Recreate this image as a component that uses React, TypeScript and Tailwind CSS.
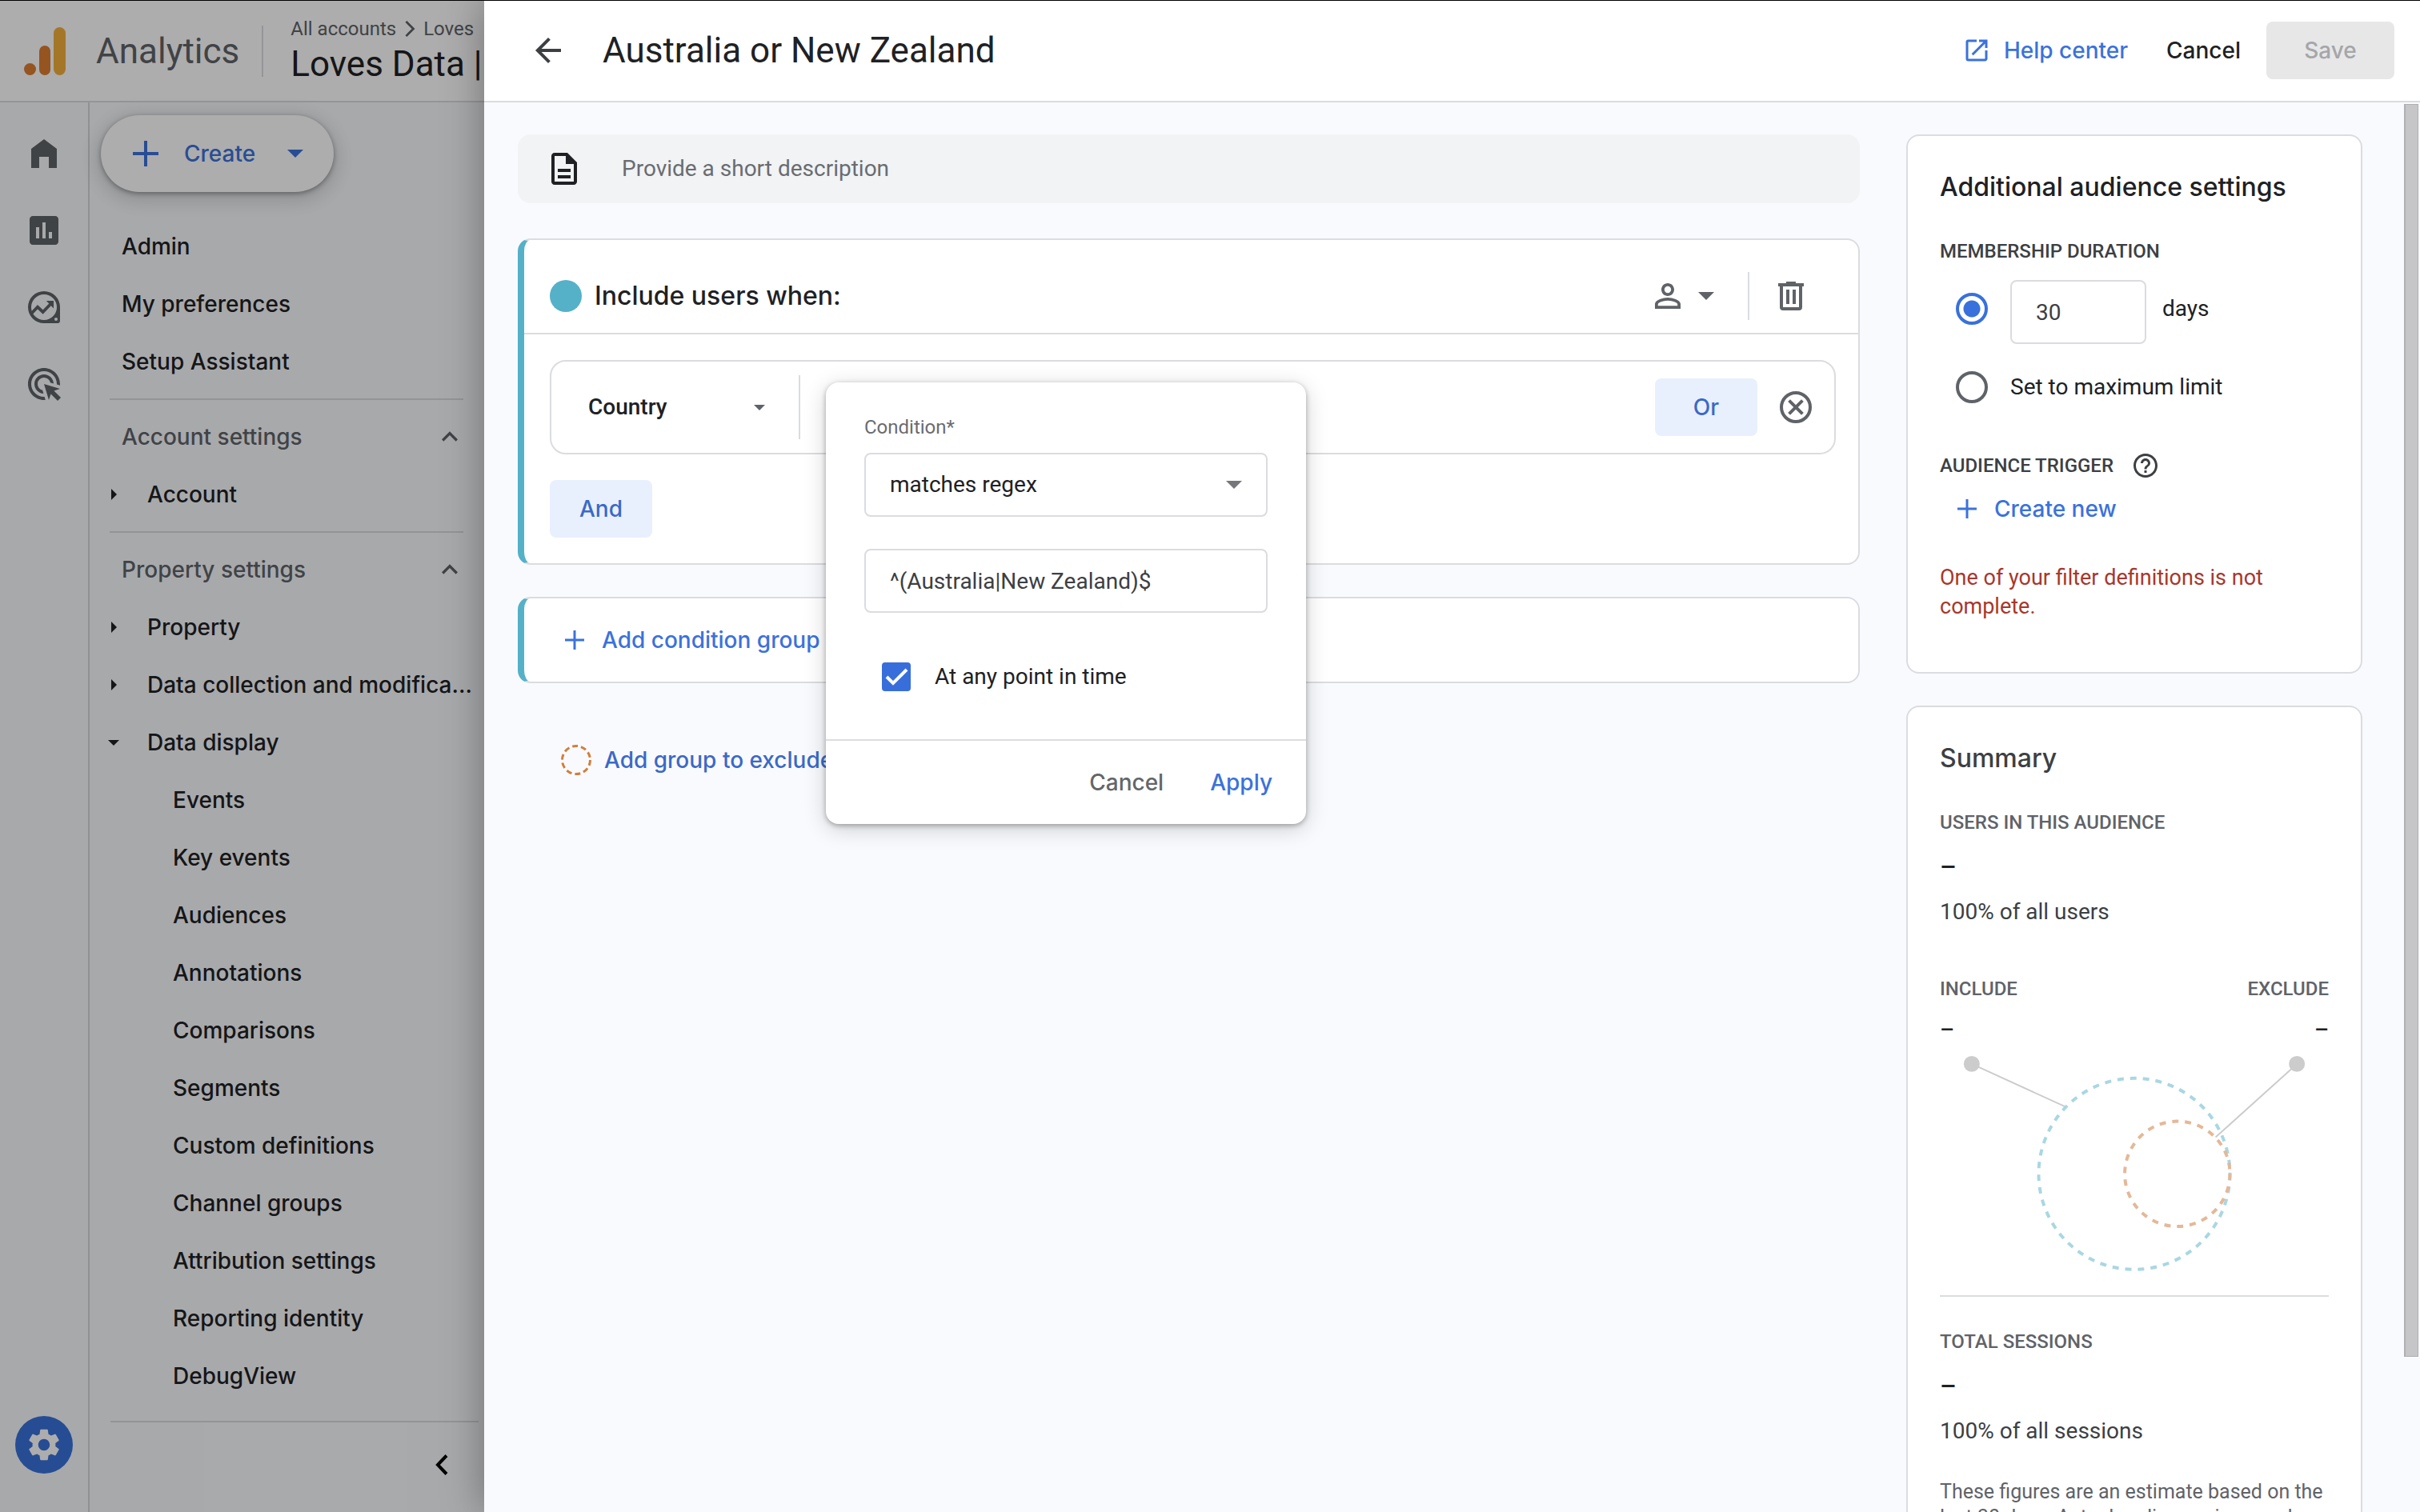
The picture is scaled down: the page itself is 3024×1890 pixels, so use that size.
import React, { useState } from 'react';
import {
  MdAdsClick,
  MdArrowBack,
  MdExpandLess,
  MdHelpOutline,
  MdInsertChart,
  MdOpenInNew,
  MdOutlineDescription,
  MdPersonOutline,
  MdSettings,
} from 'react-icons/md';

interface IconProps {
  className?: string;
}

function ArrowDown({ className }: IconProps) {
  return (
    <svg viewBox="0 0 20 10" className={className} fill="currentColor" aria-hidden="true">
      <path d="M0 0h20L10 10z" />
    </svg>
  );
}

function ArrowRight({ className }: IconProps) {
  return (
    <svg viewBox="0 0 7 14" className={className} fill="currentColor" aria-hidden="true">
      <path d="M0 0l7 7-7 7z" />
    </svg>
  );
}

function Plus({ className }: IconProps) {
  return (
    <svg viewBox="0 0 24 24" className={className} fill="none" stroke="currentColor" strokeWidth={3} aria-hidden="true">
      <path d="M12 0v24M0 12h24" />
    </svg>
  );
}

function Logo() {
  return (
    <svg viewBox="0 0 52 60" className="h-15 w-13 shrink-0" aria-hidden="true">
      <circle cx="7.5" cy="52.5" r="7.5" fill="#dd7d30" />
      <rect x="19" y="23" width="14" height="37" rx="7" fill="#dd7d30" />
      <rect x="37" y="0" width="15" height="60" rx="7.5" fill="#f2b03c" />
    </svg>
  );
}

function HomeIcon() {
  return (
    <svg viewBox="0 0 24 24" className="size-12" fill="currentColor" aria-hidden="true">
      <path d="M4 21V9l8-6 8 6v12h-5v-7H9v7z" />
    </svg>
  );
}

function ExploreIcon() {
  return (
    <svg viewBox="0 0 24 24" className="size-12" fill="currentColor" aria-hidden="true">
      <path
        fillRule="evenodd"
        d="M12 2a10 10 0 0 1 10 10v8.5a1.5 1.5 0 0 1-1.5 1.5H12a10 10 0 0 1 0-20zm0 2a8 8 0 1 0 0 16 8 8 0 0 0 0-16zm7.5 14.5a1 1 0 1 0 0 2 1 1 0 0 0 0-2z"
      />
      <path d="M4.2 15.9L8 11.9l3.3 3.1 5.2-5.4" fill="none" stroke="currentColor" strokeWidth="1.9" />
      <path d="M13.4 8H18v4.8z" />
    </svg>
  );
}

function TrashIcon() {
  return (
    <svg viewBox="0 0 24 24" className="size-12" fill="currentColor" aria-hidden="true">
      <path
        fillRule="evenodd"
        d="M7 21a2 2 0 0 1-2-2V6H4V4h5V3h6v1h5v2h-1v13a2 2 0 0 1-2 2zM17 6H7v13h10zM9 17h2V8H9zm4 0h2V8h-2z"
      />
    </svg>
  );
}

function RemoveIcon() {
  return (
    <svg viewBox="0 0 24 24" className="size-12" fill="none" stroke="currentColor" strokeWidth="2" aria-hidden="true">
      <circle cx="12" cy="12" r="9" />
      <path d="M7.8 7.8l8.4 8.4M16.2 7.8l-8.4 8.4" />
    </svg>
  );
}

const displayItems = [
  'Events',
  'Key events',
  'Audiences',
  'Annotations',
  'Comparisons',
  'Segments',
  'Custom definitions',
  'Channel groups',
  'Attribution settings',
  'Reporting identity',
  'DebugView',
];

function NavLink({ children }: { children: React.ReactNode }) {
  return (
    <a href="#" className="flex h-18 items-center pl-10">
      {children}
    </a>
  );
}

function NavHeading({ children }: { children: React.ReactNode }) {
  return (
    <button className="flex h-18 w-full items-center justify-between pl-10 pr-[23px] text-[#5f6368]">
      {children}
      <MdExpandLess className="size-10" />
    </button>
  );
}

function NavGroup({ label, open }: { label: string; open?: boolean }) {
  return (
    <button className="flex h-18 w-full items-center whitespace-nowrap pl-[23px]" aria-expanded={!!open}>
      <span className="flex w-[14px] justify-center">
        {open ? <ArrowDown className="h-[7px] w-[14px]" /> : <ArrowRight className="h-[14px] w-[7px]" />}
      </span>
      <span className="pl-[35px]">{label}</span>
    </button>
  );
}

function NavDivider() {
  return <div className="my-[10px] ml-[25px] mr-[26px] h-[2px] bg-[#d9dadc]" />;
}

function Sidebar() {
  return (
    <div className="relative flex w-[605px] shrink-0 flex-col overflow-hidden bg-[#f8fafd]">
      <header className="flex h-[127px] shrink-0 items-center whitespace-nowrap border-b-2 border-[#dadce0] bg-white pl-[30px]">
        <Logo />
        <span className="pl-[38px] font-[Roboto,sans-serif] text-[44px] leading-14 text-[#5f6368]">Analytics</span>
        <div className="ml-7 h-16 w-[2px] bg-[#dadce0]" />
        <div className="pl-[34px] font-[Roboto,sans-serif]">
          <div className="flex items-center gap-[10px] text-2xl leading-8 text-[#5f6368]">
            <a href="#">All accounts</a>
            <svg viewBox="0 0 14 22" className="h-5 w-[14px]" fill="none" stroke="currentColor" strokeWidth="3" aria-hidden="true">
              <path d="M2 1l10 10L2 21" />
            </svg>
            <a href="#">Loves</a>
          </div>
          <div className="text-[44px] leading-14 text-[#202124]">Loves Data |</div>
        </div>
      </header>

      <div className="flex min-h-0 flex-1">
        {/* Icon rail */}
        <nav className="flex w-28 shrink-0 flex-col items-center border-r-2 border-[#d5d6d9] pb-12 pt-4 text-[#5f6368]">
          <a href="#" aria-label="Home" className="flex h-24 items-center"><HomeIcon /></a>
          <a href="#" aria-label="Reports" className="flex h-24 items-center"><MdInsertChart className="size-12" /></a>
          <a href="#" aria-label="Explore" className="flex h-24 items-center"><ExploreIcon /></a>
          <a href="#" aria-label="Advertising" className="flex h-24 items-center"><MdAdsClick className="size-12" /></a>
          <a
            href="#"
            aria-label="Admin"
            className="mt-auto flex size-18 items-center justify-center rounded-full bg-[#3871db] text-white"
          >
            <MdSettings className="size-12" />
          </a>
        </nav>

        {/* Admin menu */}
        <div className="flex min-w-0 flex-1 flex-col font-[Inter,sans-serif] text-[28px] font-medium leading-10 text-[#202124]">
          <button className="ml-[14px] mt-4 flex h-24 w-[291px] shrink-0 items-center rounded-[48px] bg-white pl-10 text-[#3b72db] shadow-[0_2px_6px_rgba(0,0,0,0.35),0_6px_24px_6px_rgba(0,0,0,0.14)]">
            <Plus className="size-8" />
            <span className="pl-8">Create</span>
            <ArrowDown className="ml-10 h-[10px] w-5" />
          </button>

          <nav className="mt-8">
            <NavLink>Admin</NavLink>
            <NavLink>My preferences</NavLink>
            <NavLink>Setup Assistant</NavLink>
            <NavDivider />
            <NavHeading>Account settings</NavHeading>
            <NavGroup label="Account" />
            <NavDivider />
            <NavHeading>Property settings</NavHeading>
            <NavGroup label="Property" />
            <NavGroup label="Data collection and modifica..." />
            <NavGroup label="Data display" open />
            {displayItems.map((item) => (
              <a key={item} href="#" className="flex h-18 items-center pl-26">
                {item}
              </a>
            ))}
          </nav>

          <div className="ml-[26px] mr-[7px] mt-auto flex h-[114px] shrink-0 items-start justify-end border-t-2 border-[#d9dadc] pr-[38px] pt-10">
            <button aria-label="Collapse menu" className="text-black">
              <svg viewBox="0 0 16 26" className="h-[26px] w-4" fill="none" stroke="currentColor" strokeWidth="4" aria-hidden="true">
                <path d="M14 1.5L3 13l11 11.5" />
              </svg>
            </button>
          </div>
        </div>
      </div>

      {/* Scrim */}
      <div className="absolute inset-0 bg-black/32" />
    </div>
  );
}

function ConditionPopup() {
  const [regex, setRegex] = useState('^(Australia|New Zealand)$');
  const [anyTime, setAnyTime] = useState(true);

  return (
    <div
      role="dialog"
      aria-label="Condition"
      className="absolute left-[343px] top-[26px] z-20 w-[600px] rounded-2xl bg-white font-[Roboto,sans-serif] font-normal shadow-[0_2px_6px_rgba(0,0,0,0.3),0_6px_28px_rgba(0,0,0,0.18)]"
    >
      <div className="px-12 pb-15 pt-10">
        <label htmlFor="operator" className="block text-2xl leading-8 text-[#6a6c70]">Condition*</label>
        <div className="relative mt-4">
          <select
            id="operator"
            className="h-20 w-full appearance-none rounded-lg border-2 border-[#dadce0] bg-white px-[30px] text-[28px] text-[#202124]"
          >
            <option>matches regex</option>
          </select>
          <ArrowDown className="pointer-events-none absolute right-8 top-[35px] h-[10px] w-5 text-[#75777a]" />
        </div>
        <input
          type="text"
          aria-label="Regular expression"
          value={regex}
          onChange={(e) => setRegex(e.target.value)}
          className="mt-10 h-20 w-full rounded-lg border-2 border-[#dadce0] px-[30px] text-[28px] text-[#3c4043]"
        />
        <label className="mt-[62px] flex h-9 items-center gap-[30px] pl-[22px] text-[28px] text-[#202124]">
          <span className="relative size-9">
            <input
              type="checkbox"
              checked={anyTime}
              onChange={(e) => setAnyTime(e.target.checked)}
              className="block size-9 appearance-none rounded-sm border-4 border-[#5f6368] checked:border-[#376edb] checked:bg-[#376edb]"
            />
            {anyTime && (
              <svg viewBox="0 0 36 36" className="pointer-events-none absolute inset-0" fill="none" stroke="white" strokeWidth="4" aria-hidden="true">
                <path d="M6 18l8 8L31 9" />
              </svg>
            )}
          </span>
          At any point in time
        </label>
      </div>
      <div className="flex h-[106px] items-center justify-end gap-[58px] border-t-2 border-[#dadce0] pr-[42px] font-[Inter,sans-serif] text-[28px] font-medium">
        <button className="text-[#646669]">Cancel</button>
        <button className="text-[#3b72db]">Apply</button>
      </div>
    </div>
  );
}

function Builder() {
  return (
    <main className="min-w-0 flex-1 font-[Inter,sans-serif] text-[28px] font-medium leading-10">
      <label className="flex h-[86px] items-center rounded-2xl bg-[#f1f3f4] pl-[34px]">
        <MdOutlineDescription className="size-12 text-[#202124]" />
        <input
          type="text"
          aria-label="Description"
          placeholder="Provide a short description"
          className="ml-12 min-w-0 flex-1 bg-transparent font-[Roboto,sans-serif] font-normal placeholder:text-[#6a6c70]"
        />
      </label>

      <section className="mt-11 rounded-2xl border-2 border-l-8 border-[#dadce0] border-l-[#55b1c8] bg-white">
        <div className="flex h-[118px] items-center border-b-2 border-[#dadce0] pl-8 pr-[60px] pt-6 text-[#5f6368]">
          <div className="size-10 rounded-full bg-[#55b1c8]" />
          <h2 className="flex-1 pl-4 text-[32px] text-[#202124]">Include users when:</h2>
          <button aria-label="Scope" className="flex items-center gap-[14px]">
            <MdPersonOutline className="size-12" />
            <ArrowDown className="h-[10px] w-5" />
          </button>
          <div className="ml-[42px] mr-7 h-15 w-[2px] bg-[#dadce0]" />
          <button aria-label="Delete group"><TrashIcon /></button>
        </div>

        <div className="py-8 pl-8 pr-7">
          <div className="relative flex h-[118px] items-center rounded-[20px] border-2 border-[#dadce0]">
            <button className="flex w-[309px] items-center justify-between pl-[46px] pr-[42px] font-[Roboto,sans-serif] font-medium text-[#202124]">
              Country
              <ArrowDown className="h-[7px] w-[14px] text-[#5f6368]" />
            </button>
            <div className="h-20 w-[2px] bg-[#dadce0]" />
            <div className="flex flex-1 items-center justify-end gap-6 pr-6">
              <button className="h-18 w-32 rounded-lg bg-[#e8f0fe] text-[#3b69c6]">Or</button>
              <button aria-label="Remove condition" className="text-[#5f6368]">
                <RemoveIcon />
              </button>
            </div>
            <ConditionPopup />
          </div>
          <button className="mt-8 block h-18 w-32 rounded-lg bg-[#e8f0fe] text-[#3b69c6]">And</button>
        </div>
      </section>

      <section className="mt-10 flex h-27 items-center rounded-2xl border-2 border-l-8 border-[#dadce0] border-l-[#55b1c8] bg-white pl-[51px]">
        <button className="flex items-center gap-[22px] text-[#3b72db]">
          <Plus className="size-6" />
          Add condition group
        </button>
      </section>

      <button className="mt-18 flex h-12 items-center gap-4 pl-[54px] text-[#3b69c6]">
        <svg viewBox="0 0 38 38" className="size-[38px]" fill="none" stroke="#d07f3c" strokeWidth="3" strokeDasharray="7 4" aria-hidden="true">
          <circle cx="19" cy="19" r="17.5" />
        </svg>
        Add group to exclude
      </button>
    </main>
  );
}

const radioClass =
  'block size-10 appearance-none rounded-full border-4 border-[#5f6368] checked:border-[#3871db] checked:bg-[radial-gradient(circle,#3871db_10px,transparent_11px)]';

function AudienceSettings() {
  const [duration, setDuration] = useState('custom');
  const [days, setDays] = useState('30');

  return (
    <section className="rounded-2xl border-2 border-[#dadce0] bg-white px-10 pb-16 pt-10">
      <h2 className="font-[Inter,sans-serif] text-[32px] font-medium leading-12">Additional audience settings</h2>
      <h3 className="mt-10 text-2xl font-medium leading-8 text-[#3c4043]">MEMBERSHIP DURATION</h3>
      <div className="mt-5 flex items-start pl-5">
        <div className="flex h-18 items-center">
          <input
            type="radio"
            name="duration"
            aria-label="Custom duration"
            checked={duration === 'custom'}
            onChange={() => setDuration('custom')}
            className={radioClass}
          />
        </div>
        <input
          id="days"
          type="text"
          value={days}
          onChange={(e) => setDays(e.target.value)}
          className="ml-7 h-20 w-[170px] rounded-lg border-2 border-[#dadce0] px-[30px] text-[28px] text-[#3c4043]"
        />
        <label htmlFor="days" className="flex h-18 items-center pl-5">days</label>
      </div>
      <label className="mt-[18px] flex h-18 items-center gap-7 pl-5">
        <input
          type="radio"
          name="duration"
          checked={duration === 'max'}
          onChange={() => setDuration('max')}
          className={radioClass}
        />
        Set to maximum limit
      </label>
      <div className="mt-11 flex items-center gap-[22px] text-[#3c4043]">
        <h3 className="text-2xl font-medium leading-8">AUDIENCE TRIGGER</h3>
        <button aria-label="About audience triggers"><MdHelpOutline className="size-9" /></button>
      </div>
      <button className="mt-4 flex items-center gap-[22px] pl-[22px] font-[Inter,sans-serif] font-medium text-[#3b72db]">
        <Plus className="size-6" />
        Create new
      </button>
      <p className="mt-12 text-[27px] leading-9 text-[#a8372c]">One of your filter definitions is not complete.</p>
    </section>
  );
}

function Summary() {
  return (
    <section className="mt-10 rounded-2xl border-2 border-[#dadce0] bg-white px-10 pb-16 pt-10 text-[#3c4043]">
      <h2 className="font-[Inter,sans-serif] text-[32px] font-medium leading-12">Summary</h2>
      <h3 className="mt-10 text-2xl font-medium leading-8 text-[#5f6368]">USERS IN THIS AUDIENCE</h3>
      <p className="mt-4 text-[32px] font-medium leading-12 text-[#202124]">–</p>
      <p className="mt-3">100% of all users</p>

      <div className="mt-15 flex justify-between">
        <div>
          <h3 className="text-2xl font-medium leading-8 text-[#5f6368]">INCLUDE</h3>
          <p className="mt-4 font-medium text-[#202124]">–</p>
        </div>
        <div className="text-right">
          <h3 className="text-2xl font-medium leading-8 text-[#5f6368]">EXCLUDE</h3>
          <p className="mt-4 font-medium text-[#202124]">–</p>
        </div>
      </div>
      <svg viewBox="0 0 488 312" className="w-full" fill="none" aria-hidden="true">
        <g stroke="#cccccc" strokeWidth="2">
          <path d="M40 22l118 54M448 22l-102 92" />
        </g>
        <circle cx="40" cy="22" r="10" fill="#cccccc" />
        <circle cx="448" cy="22" r="10" fill="#cccccc" />
        <circle cx="244" cy="160" r="120" stroke="#a9d7e2" strokeWidth="4" strokeDasharray="8 8" />
        <circle cx="298" cy="160" r="66" stroke="#e4b898" strokeWidth="4" strokeDasharray="8 8" />
      </svg>

      <div className="border-t-2 border-[#dadce0] pt-10">
        <h3 className="text-2xl font-medium leading-8 text-[#5f6368]">TOTAL SESSIONS</h3>
        <p className="mt-4 text-[32px] font-medium leading-12 text-[#202124]">–</p>
        <p className="mt-3">100% of all sessions</p>
        <p className="mt-10 text-[25px] leading-8 text-[#5f6368]">
          These figures are an estimate based on the last 30 days. Actual audience size may be different.
        </p>
      </div>
    </section>
  );
}

export default function App() {
  return (
    <div className="flex h-screen overflow-hidden border-t border-black">
      <Sidebar />

      <div className="relative z-10 flex min-w-0 flex-1 flex-col bg-[#f9fafd] text-[#202124] shadow-[0_0_48px_rgba(0,0,0,0.35)]">
        <header className="flex h-[127px] shrink-0 items-center border-b-2 border-[#dadce0] bg-white pb-[2px] pl-14 pr-8 font-[Inter,sans-serif] text-[28px] font-medium">
          <button aria-label="Back" className="text-[#3c4043]"><MdArrowBack className="size-12" /></button>
          <h1 className="flex-1 pl-11 font-[Roboto,sans-serif] text-[44px] font-normal leading-14">Australia or New Zealand</h1>
          <a href="#" className="flex items-center gap-4 text-[#3b72db]">
            <MdOpenInNew className="size-9" />
            Help center
          </a>
          <button className="pl-12">Cancel</button>
          <button disabled className="ml-8 h-18 w-40 rounded-lg bg-[#e7e7e8] text-[#a5a6a8]">Save</button>
        </header>

        <div className="flex min-h-0 flex-1">
          <div className="flex min-w-0 flex-1 overflow-hidden pl-[42px] pt-10">
            <Builder />
            <aside className="ml-[58px] mr-[52px] w-[570px] shrink-0 font-[Roboto,sans-serif] text-[28px] leading-10">
              <AudienceSettings />
              <Summary />
            </aside>
          </div>
          {/* Scroll bar */}
          <div className="w-5 shrink-0 pt-[2px]">
            <div className="h-[89%] w-[18px] border border-l-2 border-[#b0b0b2] bg-[#c6c6c8]" />
          </div>
        </div>
      </div>
    </div>
  );
}
